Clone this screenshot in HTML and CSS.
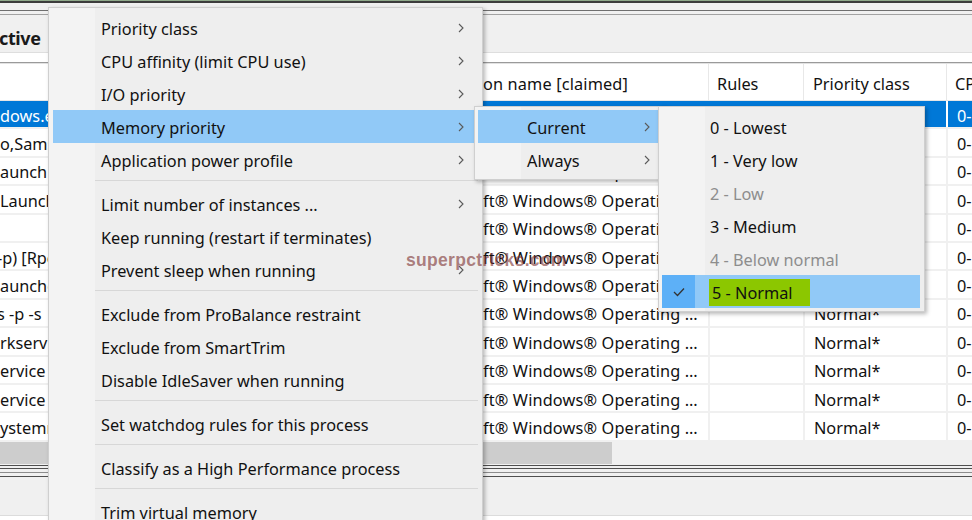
FILE: index.html
```html
<!DOCTYPE html>
<html lang="en">
<head>
<meta charset="utf-8">
<title>Process Lasso – context menu</title>
<link rel="stylesheet" href="styles.css">
</head>
<body>
<div class="window">
  <div class="frame-top"></div>
  <div class="frame-gap"></div>
  <div class="frame-double"></div>
  <div class="tabrow"><span class="tab-label">ctive</span></div>
  <div class="band"></div>
  <div class="band-lines"></div>

  <div class="grid">
    <div class="row head">
      <div class="c c1"></div>
      <div class="c c2">on name [claimed]</div>
      <div class="c c3">Rules</div>
      <div class="c c4">Priority class</div>
      <div class="c c5">CP</div>
    </div>
    <div class="row sel">
      <div class="c c1">dows.exe</div>
      <div class="c c2">ft® Windows® Operating …</div>
      <div class="c c3"></div>
      <div class="c c4">Normal*</div>
      <div class="c c5">0-</div>
    </div>
    <div class="row">
      <div class="c c1">o,SamsungMagician</div>
      <div class="c c2">ft® Windows® Operating …</div>
      <div class="c c3"></div>
      <div class="c c4">Normal*</div>
      <div class="c c5">0-</div>
    </div>
    <div class="row">
      <div class="c c1">aunch</div>
      <div class="c c2">ft® Windows® Operating …</div>
      <div class="c c3"></div>
      <div class="c c4">Normal*</div>
      <div class="c c5">0-</div>
    </div>
    <div class="row">
      <div class="c c1">Launcher</div>
      <div class="c c2">ft® Windows® Operating …</div>
      <div class="c c3"></div>
      <div class="c c4">Normal*</div>
      <div class="c c5">0-</div>
    </div>
    <div class="row">
      <div class="c c1"></div>
      <div class="c c2">ft® Windows® Operating …</div>
      <div class="c c3"></div>
      <div class="c c4">Normal*</div>
      <div class="c c5">0-</div>
    </div>
    <div class="row">
      <div class="c c1 cut">-p) [RpcSs]</div>
      <div class="c c2">ft® Windows® Operating …</div>
      <div class="c c3"></div>
      <div class="c c4">Normal*</div>
      <div class="c c5">0-</div>
    </div>
    <div class="row">
      <div class="c c1">auncher</div>
      <div class="c c2">ft® Windows® Operating …</div>
      <div class="c c3"></div>
      <div class="c c4">Normal*</div>
      <div class="c c5">0-</div>
    </div>
    <div class="row">
      <div class="c c1 cut">s -p -s</div>
      <div class="c c2">ft® Windows® Operating …</div>
      <div class="c c3"></div>
      <div class="c c4">Normal*</div>
      <div class="c c5">0-</div>
    </div>
    <div class="row">
      <div class="c c1">rkservice</div>
      <div class="c c2">ft® Windows® Operating …</div>
      <div class="c c3"></div>
      <div class="c c4">Normal*</div>
      <div class="c c5">0-</div>
    </div>
    <div class="row">
      <div class="c c1">ervice -p</div>
      <div class="c c2">ft® Windows® Operating …</div>
      <div class="c c3"></div>
      <div class="c c4">Normal*</div>
      <div class="c c5">0-</div>
    </div>
    <div class="row">
      <div class="c c1">ervice -p</div>
      <div class="c c2">ft® Windows® Operating …</div>
      <div class="c c3"></div>
      <div class="c c4">Normal*</div>
      <div class="c c5">0-</div>
    </div>
    <div class="row">
      <div class="c c1">ystemnotify</div>
      <div class="c c2">ft® Windows® Operating …</div>
      <div class="c c3"></div>
      <div class="c c4">Normal*</div>
      <div class="c c5">0-</div>
    </div>
  </div>

  <div class="hscroll"><div class="thumb"></div></div>
  <div class="splitter"></div>
  <div class="lower"></div>
  <div class="lower-white"></div>

  <!-- main context menu -->
  <div class="menu main-menu">
    <div class="item"><span class="label">Priority class</span><svg class="arrow" viewBox="0 0 6 10"><polyline points="1,1 5,5 1,9"/></svg></div>
    <div class="item"><span class="label">CPU affinity (limit CPU use)</span><svg class="arrow" viewBox="0 0 6 10"><polyline points="1,1 5,5 1,9"/></svg></div>
    <div class="item"><span class="label">I/O priority</span><svg class="arrow" viewBox="0 0 6 10"><polyline points="1,1 5,5 1,9"/></svg></div>
    <div class="item hot"><span class="label">Memory priority</span><svg class="arrow" viewBox="0 0 6 10"><polyline points="1,1 5,5 1,9"/></svg></div>
    <div class="item"><span class="label">Application power profile</span><svg class="arrow" viewBox="0 0 6 10"><polyline points="1,1 5,5 1,9"/></svg></div>
    <div class="sep"></div>
    <div class="item"><span class="label">Limit number of instances ...</span><svg class="arrow" viewBox="0 0 6 10"><polyline points="1,1 5,5 1,9"/></svg></div>
    <div class="item"><span class="label">Keep running (restart if terminates)</span></div>
    <div class="item"><span class="label">Prevent sleep when running</span><svg class="arrow" viewBox="0 0 6 10"><polyline points="1,1 5,5 1,9"/></svg></div>
    <div class="sep"></div>
    <div class="item"><span class="label">Exclude from ProBalance restraint</span></div>
    <div class="item"><span class="label">Exclude from SmartTrim</span></div>
    <div class="item"><span class="label">Disable IdleSaver when running</span></div>
    <div class="sep"></div>
    <div class="item"><span class="label">Set watchdog rules for this process</span></div>
    <div class="sep"></div>
    <div class="item"><span class="label">Classify as a High Performance process</span></div>
    <div class="sep"></div>
    <div class="item"><span class="label">Trim virtual memory</span></div>
  </div>

  <!-- submenu: Current / Always -->
  <div class="menu sub-menu">
    <div class="item hot"><span class="label">Current</span><svg class="arrow" viewBox="0 0 6 10"><polyline points="1,1 5,5 1,9"/></svg></div>
    <div class="item"><span class="label">Always</span><svg class="arrow" viewBox="0 0 6 10"><polyline points="1,1 5,5 1,9"/></svg></div>
  </div>

  <!-- submenu: levels -->
  <div class="menu level-menu">
    <div class="item"><span class="label">0 - Lowest</span></div>
    <div class="item"><span class="label">1 - Very low</span></div>
    <div class="item dim"><span class="label">2 - Low</span></div>
    <div class="item"><span class="label">3 - Medium</span></div>
    <div class="item dim"><span class="label">4 - Below normal</span></div>
    <div class="item hot checked">
      <span class="check"><svg viewBox="0 0 12 10"><polyline points="1,5 4.5,8.5 11,1.5"/></svg></span>
      <span class="label"><span class="mark">5 - Normal</span></span>
    </div>
  </div>

  <div class="watermark">superpctricks.com</div>
</div>
</body>
</html>
```

FILE: styles.css
```css
html, body {
  margin: 0;
  padding: 0;
}

body {
  width: 972px;
  height: 520px;
  overflow: hidden;
  background: #ffffff;
  font-family: "Noto Sans", "Open Sans", sans-serif;
  font-size: 16.3px;
  color: #111;
}

.window {
  position: relative;
  width: 972px;
  height: 520px;
  overflow: hidden;
  background: #f0f0f0;
}

/* ---------- top frame ---------- */
.frame-top {
  height: 2px;
  border-top: 1px solid #8fa98a;
  background: #3c3c3c;
}

.frame-gap {
  height: 7px;
  background: #f0f0f0;
}

.frame-double {
  height: 3px;
  border-top: 1px solid #6f6f6f;
  border-bottom: 1px solid #a2a2a2;
  background: #f0f0f0;
}

.tabrow {
  height: 37px;
  box-sizing: border-box;
  padding-top: 8px;
  display: flex;
  align-items: center;
  background: #f0f0f0;
}

.tab-label {
  font-family: "Noto Sans", sans-serif;
  font-weight: 700;
  font-size: 18px;
  letter-spacing: -0.4px;
  color: #1a1a1a;
  margin-left: -1px;
}

.band {
  height: 9px;
  border-top: 1px solid #dedede;
  background: #ffffff;
}

.band-lines {
  height: 1px;
  border-top: 1px solid #9a9a9a;
  background: #e2e2e2;
}

/* ---------- table ---------- */
.grid {
  background: #ffffff;
}

.row {
  display: grid;
  grid-template-columns: 482px 226px 95px 143px 26px;
  height: 28.4px;
  box-sizing: border-box;
  border-bottom: 2px solid #f0f0f0;
  align-items: stretch;
}

.row.head {
  height: 37px;
  border-bottom: 1px solid #e6e6e6;
}

.c {
  display: flex;
  align-items: center;
  white-space: nowrap;
  overflow: hidden;
  padding-left: 9px;
  padding-top: 3px;
  box-sizing: border-box;
  border-left: 2px solid #f0f0f0;
}

.c1 {
  padding-left: 0;
  border-left: 0;
}

.c1.cut {
  text-indent: -3px;
}

.c2 {
  padding-left: 1px;
  border-left: 0;
  letter-spacing: 0.15px;
}

.head .c {
  border-left-color: #e8e8e8;
  border-left-width: 1px;
}

.head .c1,
.head .c2 {
  border-left: 0;
}

.head .c3 { padding-left: 8px; }
.head .c4 { padding-left: 9px; }
.head .c5 { padding-left: 8px; }

.row.sel {
  background: #0078d7;
  color: #ffffff;
}

.row.sel .c {
  border-left-color: #0078d7;
}

.row.sel .c5 {
  border-left-color: #ffffff;
}

/* ---------- scroll + splitter ---------- */
.hscroll {
  height: 22px;
  background: #f0f0f0;
  display: flex;
}

.thumb {
  width: 612px;
  background: #cdcdcd;
}

.splitter {
  height: 14px;
  background: linear-gradient(to bottom,
    #f0f0f0 0 1px, #4f4f4f 1px 2px, #f0f0f0 2px 4px, #4f4f4f 4px 5px,
    #f0f0f0 5px 8px, #8c8c8c 8px 9px, #f0f0f0 9px 12px, #4f4f4f 12px 13px,
    #f0f0f0 13px 14px);
}

.lower {
  height: 37px;
  background: #f0f0f0;
  border-bottom: 1px solid #dcdcdc;
}

.lower-white {
  height: 10px;
  background: #ffffff;
}

/* ---------- menus ---------- */
.menu {
  position: absolute;
  box-sizing: border-box;
  border: 1px solid #cfcfcf;
  padding: 3px 4px 3px 3px;
  background: linear-gradient(to right, #f3f3f3 0 46px, #eeeeee 46px);
  box-shadow: 2px 2px 4px rgba(0, 0, 0, 0.28);
}

.main-menu {
  left: 48px;
  top: 7px;
  width: 435px;
  height: 540px;
  padding-left: 4px;
}

.sub-menu {
  left: 474px;
  top: 106px;
  width: 193px;
}

.level-menu {
  left: 658px;
  top: 106px;
  width: 267px;
}

.item {
  height: 33px;
  display: flex;
  align-items: center;
  padding-left: 48px;
  padding-right: 12px;
  position: relative;
  box-sizing: border-box;
}

.main-menu .item {
  padding-left: 48px;
  padding-right: 14px;
}

.sub-menu .item {
  padding-left: 49px;
}

.label {
  flex: 1;
  padding-top: 2px;
  white-space: nowrap;
}

.item.hot {
  background: #91c9f7;
}

.item.dim {
  color: #8d8d8d;
}

.arrow {
  width: 6px;
  height: 10px;
  fill: none;
  stroke: #5a5a5a;
  stroke-width: 1.1;
}

.sep {
  height: 11px;
  margin-left: 42px;
  background: linear-gradient(to bottom, transparent 0 4px, #d7d7d7 4px 5px, transparent 5px);
}

.check {
  width: 33px;
  align-self: stretch;
  background: #5db0f7;
  display: flex;
  align-items: center;
  justify-content: center;
  margin-right: 17px;
}

.check svg {
  width: 12px;
  height: 10px;
  fill: none;
  stroke: #333;
  stroke-width: 1.3;
}

.level-menu .item.checked {
  padding-left: 0;
}

.mark {
  display: inline-block;
  background: #8cc700;
  padding: 2px 17px 1px 3px;
  margin-left: -3px;
  line-height: 24px;
}

/* ---------- watermark ---------- */
.watermark {
  position: absolute;
  left: 406px;
  top: 250px;
  font-family: "Liberation Sans", Arial, sans-serif;
  font-weight: 700;
  font-size: 17.5px;
  color: rgba(125, 50, 50, 0.62);
  letter-spacing: 0.3px;
}
```
